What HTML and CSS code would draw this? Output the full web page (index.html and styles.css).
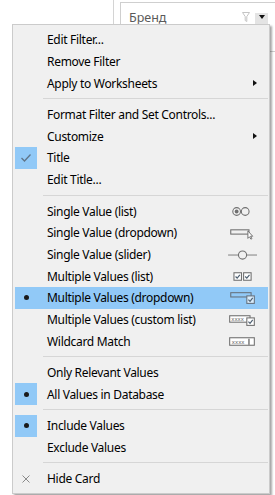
FILE: index.html
```html
<!DOCTYPE html>
<html lang="en">

<head>
    <meta charset="UTF-8">
    <meta name="viewport" content="width=device-width, initial-scale=1.0">
    <title>Filter menu</title>
    <link rel="stylesheet" href="styles.css">
</head>

<body>
    <div class="workspace">
        <div class="sheet-pane"></div>
        <div class="filter-card">
            <div class="card-head">
                <span class="card-title">Бренд</span>
                <svg class="funnel" width="8" height="10" viewBox="0 0 8 10">
                    <path d="M0.5 0.5 H7.5 L4.8 4.5 V9.5 L3.2 8.5 V4.5 Z" fill="none" stroke="#c4c4c4" />
                </svg>
                <span class="card-drop"><span class="tri-down"></span></span>
            </div>
        </div>
    </div>

    <div class="menu">
        <div class="item"><span class="mark"></span><span class="label">Edit Filter...</span></div>
        <div class="item"><span class="mark"></span><span class="label">Remove Filter</span></div>
        <div class="item"><span class="mark"></span><span class="label">Apply to Worksheets</span><span class="sub-arrow"></span></div>
        <div class="sep"></div>
        <div class="item"><span class="mark"></span><span class="label">Format Filter and Set Controls...</span></div>
        <div class="item"><span class="mark"></span><span class="label">Customize</span><span class="sub-arrow"></span></div>
        <div class="item"><span class="mark checked">
                <svg width="12" height="10" viewBox="0 0 12 10">
                    <path d="M1.5 5 L4.5 8 L10.5 1.5" fill="none" stroke="#5f7488" stroke-width="1.3" />
                </svg>
            </span><span class="label">Title</span></div>
        <div class="item"><span class="mark"></span><span class="label">Edit Title...</span></div>
        <div class="sep"></div>
        <div class="item"><span class="mark"></span><span class="label">Single Value (list)</span>
            <svg class="kind" width="30" height="15" viewBox="0 0 28 14">
                <circle cx="9" cy="7" r="3.6" fill="none" stroke="#707070" />
                <circle cx="9" cy="7" r="1.8" fill="#707070" />
                <circle cx="17" cy="7" r="3.6" fill="none" stroke="#707070" />
            </svg>
        </div>
        <div class="item"><span class="mark"></span><span class="label">Single Value (dropdown)</span>
            <svg class="kind" width="30" height="15" viewBox="0 0 28 14">
                <rect x="3.5" y="4.5" width="17" height="4" fill="none" stroke="#707070" />
                <path d="M19.5 5.5 V12.5 L21 11 L22.3 13.2 L23.3 12.7 L22 10.5 H24 Z" fill="#fff" stroke="#707070" stroke-width="0.9" />
            </svg>
        </div>
        <div class="item"><span class="mark"></span><span class="label">Single Value (slider)</span>
            <svg class="kind" width="30" height="15" viewBox="0 0 28 14">
                <line x1="1" y1="7.5" x2="28" y2="7.5" stroke="#a0a0a0" stroke-width="1.3" />
                <circle cx="14.5" cy="7.5" r="3.8" fill="#f0f0f0" stroke="#707070" />
            </svg>
        </div>
        <div class="item"><span class="mark"></span><span class="label">Multiple Values (list)</span>
            <svg class="kind" width="30" height="15" viewBox="0 0 28 14">
                <rect x="6.5" y="3.5" width="7" height="7" fill="#fff" stroke="#707070" />
                <path d="M8 7 L9.5 8.6 L12 5.4" fill="none" stroke="#4d5f70" stroke-width="1.1" />
                <rect x="15.5" y="3.5" width="7" height="7" fill="#fff" stroke="#707070" />
                <path d="M17 7 L18.5 8.6 L21 5.4" fill="none" stroke="#4d5f70" stroke-width="1.1" />
            </svg>
        </div>
        <div class="item active"><span class="mark"><span class="dot"></span></span><span class="label">Multiple Values (dropdown)</span>
            <svg class="kind" width="30" height="15" viewBox="0 0 28 14">
                <rect x="3.5" y="2.5" width="19" height="4" fill="none" stroke="#66727e" />
                <rect x="18.5" y="5.5" width="7" height="7" fill="#d9ecfb" stroke="#66727e" />
                <path d="M20 9 L21.5 10.6 L24 7.4" fill="none" stroke="#4d5f70" stroke-width="1.1" />
            </svg>
        </div>
        <div class="item"><span class="mark"></span><span class="label">Multiple Values (custom list)</span>
            <svg class="kind" width="30" height="15" viewBox="0 0 28 14">
                <rect x="2.5" y="3.5" width="19" height="6" fill="#fff" stroke="#707070" />
                <text x="4" y="8.6" class="tiny">xxxx</text>
                <rect x="18.5" y="5.5" width="7" height="7" fill="#fff" stroke="#707070" />
                <path d="M20 9 L21.5 10.6 L24 7.4" fill="none" stroke="#4d5f70" stroke-width="1.1" />
            </svg>
        </div>
        <div class="item"><span class="mark"></span><span class="label">Wildcard Match</span>
            <svg class="kind" width="30" height="15" viewBox="0 0 28 14">
                <rect x="2.5" y="3.5" width="23" height="7" fill="#fff" stroke="#707070" />
                <text x="4.5" y="9.2" class="tiny">xxxx</text>
                <line x1="20.5" y1="4.5" x2="20.5" y2="10" stroke="#444" />
            </svg>
        </div>
        <div class="sep"></div>
        <div class="item"><span class="mark"></span><span class="label">Only Relevant Values</span></div>
        <div class="item"><span class="mark checked"><span class="dot"></span></span><span class="label">All Values in Database</span></div>
        <div class="sep"></div>
        <div class="item"><span class="mark checked"><span class="dot"></span></span><span class="label">Include Values</span></div>
        <div class="item"><span class="mark"></span><span class="label">Exclude Values</span></div>
        <div class="sep"></div>
        <div class="item"><span class="mark">
                <svg width="8" height="8" viewBox="0 0 8 8">
                    <path d="M0.5 0.5 L7.5 7.5 M7.5 0.5 L0.5 7.5" stroke="#8a8a8a" stroke-width="1" />
                </svg>
            </span><span class="label">Hide Card</span></div>
    </div>
</body>

</html>
```

FILE: styles.css
```css
* {
    box-sizing: border-box;
}

body {
    margin: 0;
    background-color: #fff;
    font-family: "Noto Sans", "Open Sans", sans-serif;
    font-size: 12px;
    color: #000;
}

.workspace {
    display: flex;
    height: 60px;
}

.sheet-pane {
    width: 114px;
    border-right: 1px solid #d4d4d4;
}

.filter-card {
    flex: 1;
    margin-left: 6px;
    margin-top: 2px;
    height: 50px;
    border: 1px solid #cfcfcf;
    border-right: none;
}

.card-head {
    display: flex;
    align-items: center;
    height: 28px;
    padding-left: 8px;
}

.card-title {
    flex: 1;
    color: #5a5a5a;
    font-size: 12.5px;
}

.funnel {
    margin-right: 5px;
}

.card-drop {
    display: flex;
    align-items: center;
    justify-content: center;
    width: 13px;
    height: 18px;
    margin-top: 10px;
    margin-right: 7px;
    background-color: #e4e4e4;
}

.tri-down {
    margin-top: -10px;
    border-left: 3.5px solid transparent;
    border-right: 3.5px solid transparent;
    border-top: 4px solid #111;
}

/* context menu */
.menu {
    position: absolute;
    left: 12px;
    top: 24px;
    width: 258px;
    padding: 4px 1px 3px 2px;
    background-color: #f0f0f0;
    border: 1px solid #cbcbcb;
    box-shadow: 2px 2px 2px rgba(0, 0, 0, 0.35);
}

.item {
    display: flex;
    align-items: center;
    height: 21.7px;
}

.item.active {
    background-color: #91c9f7;
}

.mark {
    display: flex;
    align-items: center;
    justify-content: center;
    width: 22px;
    height: 22px;
    flex-shrink: 0;
}

.mark.checked {
    background-color: #91c9f7;
}

.dot {
    width: 5px;
    height: 5px;
    border-radius: 50%;
    background-color: #1a1a1a;
}

.label {
    flex: 1;
    margin-left: 10px;
    white-space: nowrap;
    letter-spacing: -0.3px;
}

.sub-arrow {
    margin-right: 11px;
    border-top: 3.5px solid transparent;
    border-bottom: 3.5px solid transparent;
    border-left: 4px solid #111;
}

.kind {
    margin-right: 11px;
}

.tiny {
    font-family: "DejaVu Sans", sans-serif;
    font-size: 5px;
    fill: #5a5a5a;
}

.sep {
    height: 1px;
    margin: 4.35px 0 4.35px 28px;
    background-color: #d6d6d6;
}
```
